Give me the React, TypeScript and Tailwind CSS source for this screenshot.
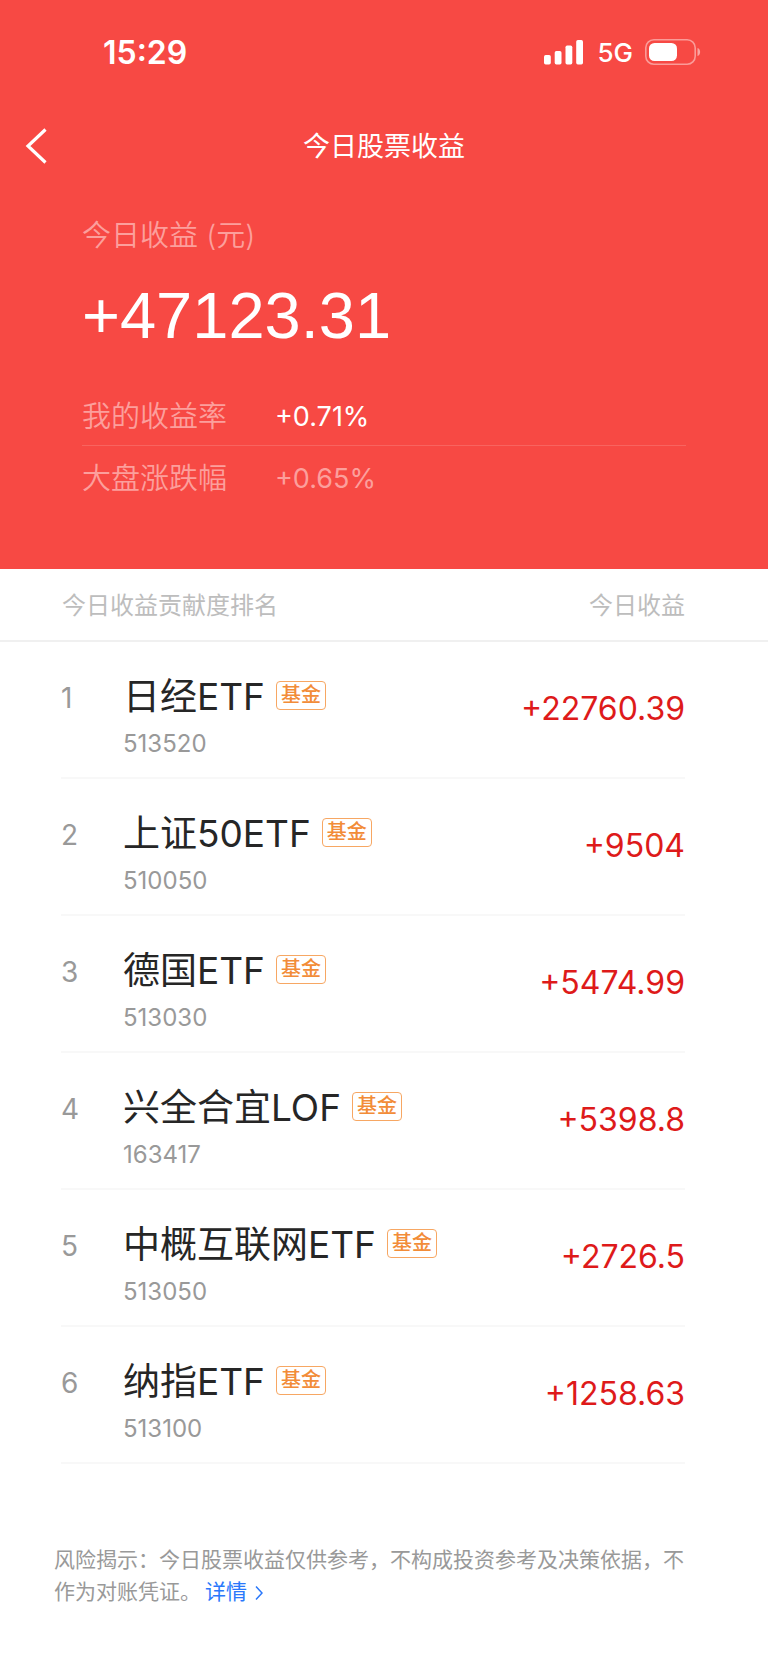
const rows = [
  { name: '日经ETF', code: '513520', gain: '+22760.39' },
  { name: '上证50ETF', code: '510050', gain: '+9504' },
  { name: '德国ETF', code: '513030', gain: '+5474.99' },
  { name: '兴全合宜LOF', code: '163417', gain: '+5398.8' },
  { name: '中概互联网ETF', code: '513050', gain: '+2726.5' },
  { name: '纳指ETF', code: '513100', gain: '+1258.63' },
];

function StatusBar() {
  return (
    <div className="flex h-[104px] items-center justify-between pr-[67px] pl-[103px]">
      <span className="pt-0.5 text-[32px] leading-10 font-semibold">15:29</span>
      <div className="flex items-center">
        <svg className="mr-[14px] h-[25px] w-[39px]" viewBox="0 0 39 25" fill="currentColor" aria-hidden="true">
          <rect x="0" y="15" width="6.800" height="9.500" rx="1.700" />
          <rect x="10.700" y="11" width="6.800" height="13.500" rx="1.700" />
          <rect x="21.500" y="5.500" width="6.800" height="19" rx="1.700" />
          <rect x="32.200" y="0" width="6.800" height="24.500" rx="1.700" />
        </svg>
        <span className="mr-3 pt-0.5 text-[26px] leading-8 font-medium">5G</span>
        <svg className="h-[26px] w-14" viewBox="0 0 56 26" fill="none" aria-hidden="true">
          <rect x=".8" y=".8" width="49.400" height="24.400" rx="8" stroke="white" strokeOpacity=".45" strokeWidth="1.600" />
          <rect x="4" y="4" width="28" height="18" rx="5.500" fill="white" />
          <path d="M52.500 9c3.500 1 3.500 7 0 8z" fill="white" fillOpacity=".5" />
        </svg>
      </div>
    </div>
  );
}

export default function App() {
  return (
    <div className="min-h-screen bg-white font-['Inter','Noto_Sans_CJK_SC',sans-serif]">
      <header className="bg-[#f74944] pb-[62px] text-white">
        <StatusBar />
        <nav className="grid h-[84px] grid-cols-[72px_1fr_72px] items-center">
          <button type="button" aria-label="返回" className="flex h-full items-center pl-[25px]">
            <svg className="h-9 w-6" viewBox="0 0 24 36" fill="none" stroke="currentColor" strokeWidth="3.200" aria-hidden="true">
              <path d="M20.500 1.500 3 18l17.500 16.500" />
            </svg>
          </button>
          <h1 className="pt-0.5 text-center text-[27px] leading-9">今日股票收益</h1>
        </nav>
        <section className="px-[82px] pt-[30px]">
          <p className="text-[29px] leading-9 font-[350] text-[#fc9f9c]">今日收益 (元)</p>
          <p className="pt-6 font-['Liberation_Sans',sans-serif] text-[65px] leading-[76px]">+47123.31</p>
          <dl className="pt-[30px] leading-[57px]">
            <div className="flex border-b border-white/15 pt-1">
              <dt className="w-[193px] text-[29px] font-[350] text-[#fc9f9c]">我的收益率</dt>
              <dd className="text-[27px]">+0.71%</dd>
            </div>
            <div className="flex pt-1 text-[#fc9f9c]">
              <dt className="w-[193px] text-[29px] font-[350]">大盘涨跌幅</dt>
              <dd className="text-[27px]">+0.65%</dd>
            </div>
          </dl>
        </section>
      </header>
      <main>
        <div className="flex h-[73px] items-center justify-between border-b-2 border-[#f0f0f0] pt-0.5 pr-[83px] pl-[62px] text-[24px] text-[#bdbdbd]">
          <h2>今日收益贡献度排名</h2>
          <span>今日收益</span>
        </div>
        <ol className="pr-[83px] pl-[61px]">
          {rows.map((row, i) => (
            <li key={row.code} className="flex h-[137px] border-b-2 border-[#f8f8f8]">
              <span className="w-[62px] pt-[38px] text-[28px] leading-9 text-[#999999]">{i + 1}</span>
              <div className="flex-1 pt-[31px]">
                <div className="flex items-start gap-[11px]">
                  <h3 className="text-[37px] leading-[48px] text-[#262626]">{row.name}</h3>
                  <span className="mt-2 rounded border border-[#f7a763] px-1 text-[20px] leading-[27px] font-medium text-[#f28c38]">基金</span>
                </div>
                <p className="text-[24px] leading-[46px] text-[#999999]">{row.code}</p>
              </div>
              <span className="pt-[45px] text-[32px] leading-[44px] text-[#de1a1a]">{row.gain}</span>
            </li>
          ))}
        </ol>
        <div className="pt-20 pr-[70px] pb-14 pl-[54px] text-[21px] leading-8 text-[#999999]">
          <span>风险揭示：今日股票收益仅供参考，不构成投资参考及决策依据，不作为对账凭证。</span>
          <a href="#details" className="ml-1 text-[#2a78fb]">
            详情
            <svg className="ml-2 inline-block h-4 w-2" viewBox="0 0 8 16" fill="none" stroke="currentColor" strokeWidth="1.500" aria-hidden="true">
              <path d="m1 1.500 6 6.500-6 6.500" />
            </svg>
          </a>
        </div>
      </main>
    </div>
  );
}
